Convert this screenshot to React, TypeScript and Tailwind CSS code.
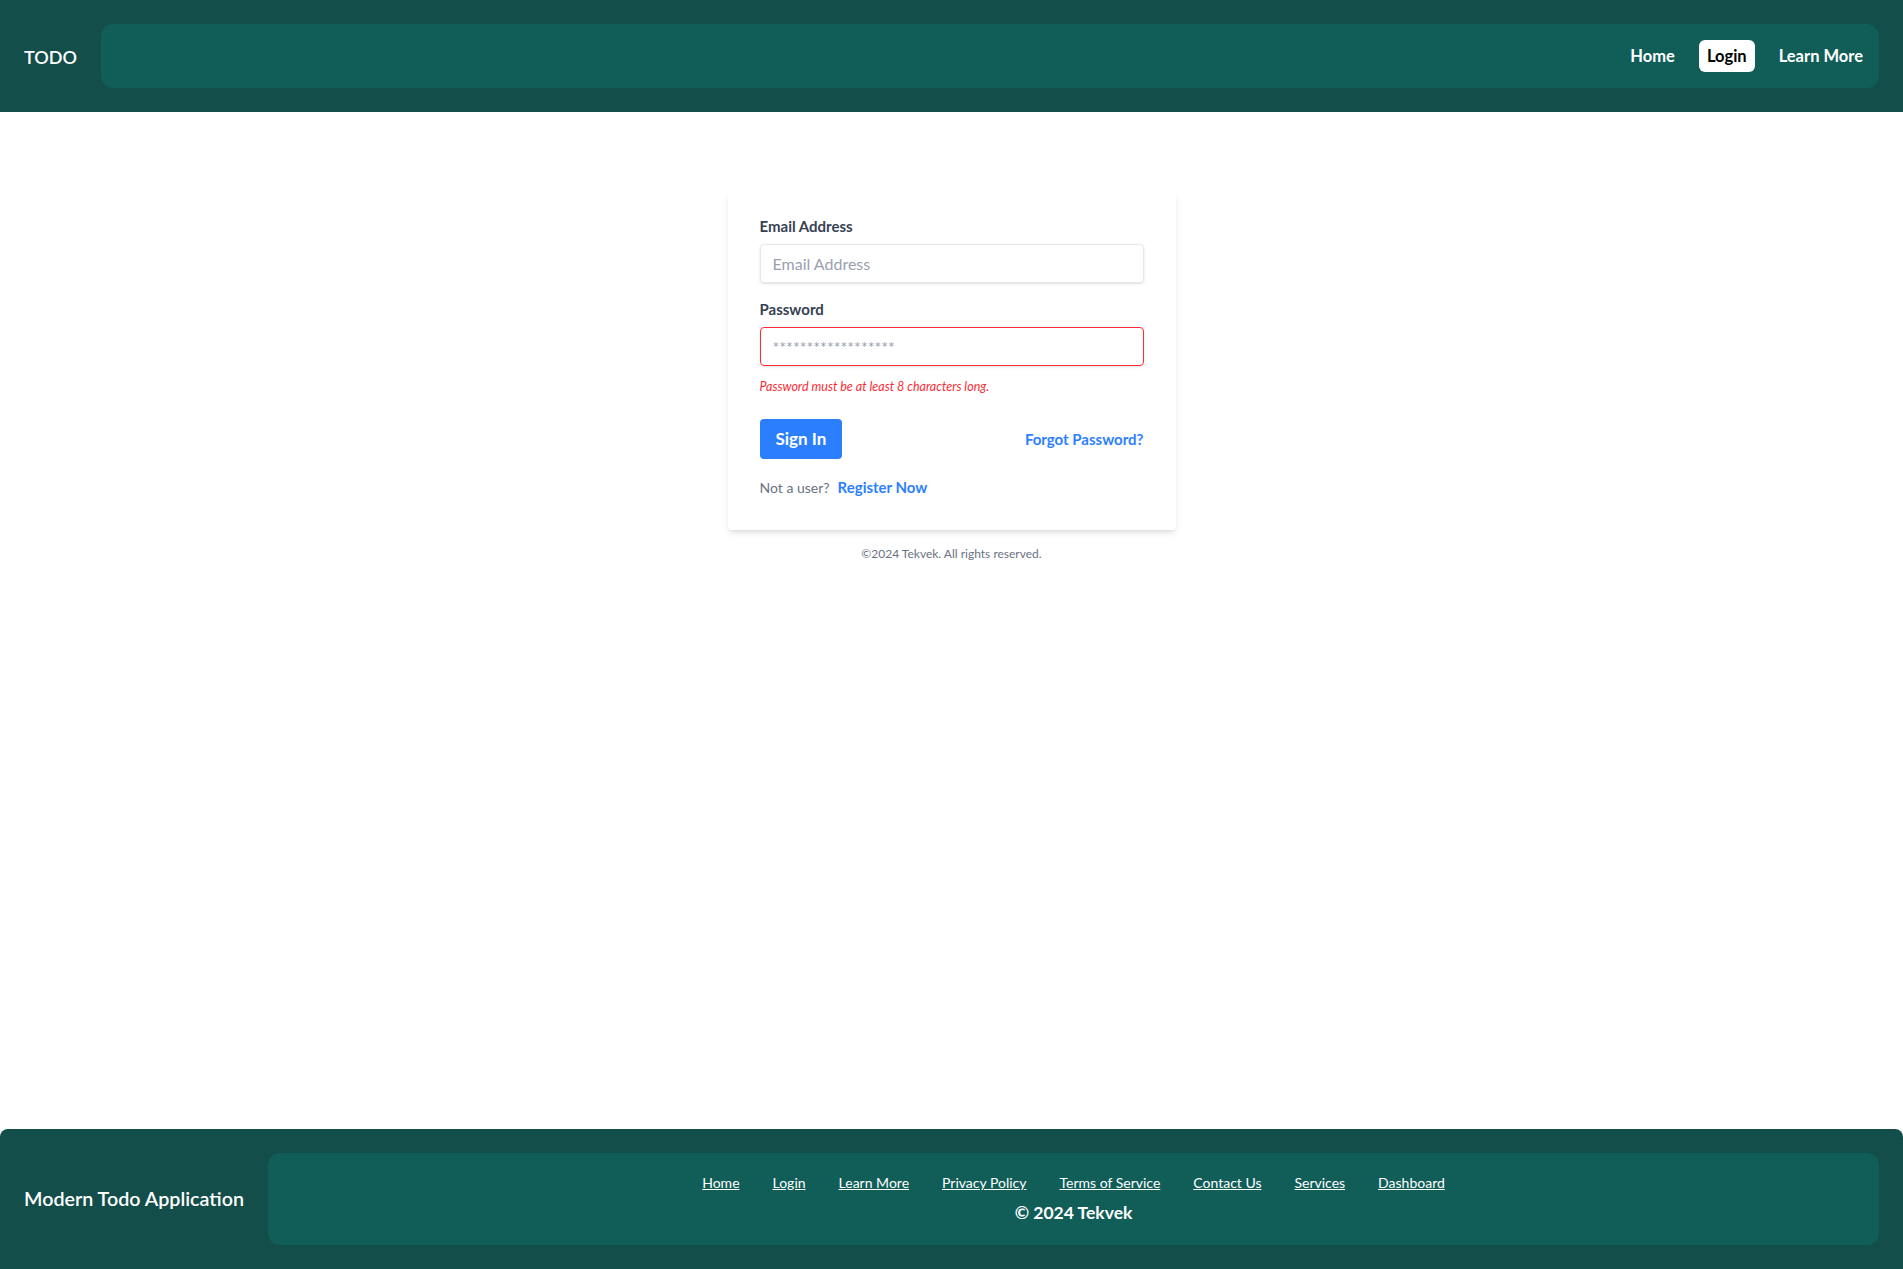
import React from "react";

export default function App() {
  const footerLinks = [
    "Home",
    "Login",
    "Learn More",
    "Privacy Policy",
    "Terms of Service",
    "Contact Us",
    "Services",
    "Dashboard",
  ];
  return (
    <div
      className="min-h-screen flex flex-col bg-white"
      style={{ fontFamily: "Lato, 'Noto Sans', sans-serif" }}
    >
      <header className="bg-[#134e4a] p-6 flex items-center gap-6">
        <div className="text-white text-[18px] leading-7 font-semibold pt-[2px]">TODO</div>
        <nav className="flex-1 bg-[#115e59] rounded-xl h-16 flex items-center justify-end px-2 gap-4">
          <a className="px-2 h-8 flex items-center text-white font-bold text-[16.5px] rounded-md pt-[1px]">Home</a>
          <a className="px-2 h-8 flex items-center bg-white text-black font-bold text-[16.5px] rounded-md pt-[1px]">Login</a>
          <a className="px-2 h-8 flex items-center text-white font-bold text-[16.5px] rounded-md pt-[1px]">Learn More</a>
        </nav>
      </header>

      <main className="flex-1 flex flex-col items-center pt-20">
        <div className="w-[448px]">
          <form className="bg-white shadow-md rounded px-8 pt-6 pb-8 mb-4">
            <div className="mb-4">
              <label className="block text-gray-700 text-[15px] leading-5 font-bold mb-2">Email Address</label>
              <input
                className="shadow appearance-none border border-gray-200 rounded w-full py-2 px-3 h-[39px] text-gray-700 leading-tight text-base placeholder:text-gray-400 outline-none"
                type="email"
                placeholder="Email Address"
              />
            </div>
            <div className="mb-6">
              <label className="block text-gray-700 text-[15px] leading-5 font-bold mb-2">Password</label>
              <input
                className="shadow appearance-none border border-red-500 rounded w-full py-2 px-3 h-[39px] text-gray-700 mb-3 leading-tight text-base placeholder:text-gray-400 outline-none"
                type="password"
                placeholder="******************"
              />
              <p className="text-red-500 text-[12.5px] leading-4 italic pt-[1px]">Password must be at least 8 characters long.</p>
            </div>
            <div className="flex items-center justify-between">
              <button
                className="bg-blue-500 text-white font-bold text-[17px] leading-6 py-2 px-4 rounded"
                type="button"
              >
                Sign In
              </button>
              <a className="inline-block align-baseline font-bold text-[15px] text-blue-500">Forgot Password?</a>
            </div>
            <div className="mt-[18px] leading-5 flex items-baseline">
              <span className="text-gray-500 text-sm">Not a user?</span>
              <a className="ml-2 font-bold text-[15px] text-blue-500">Register Now</a>
            </div>
          </form>
          <p className="text-center text-gray-500 text-xs">©2024 Tekvek. All rights reserved.</p>
        </div>
      </main>

      <footer className="bg-[#134e4a] rounded-t-lg p-6 flex items-center gap-6">
        <div className="text-white text-[19.7px] font-semibold">Modern Todo Application</div>
        <div className="flex-1 bg-[#115e59] rounded-xl py-5 flex flex-col items-center">
          <div className="flex items-center gap-[33px] text-sm leading-5 text-white">
            {footerLinks.map((l) => (
              <a key={l} className="underline">
                {l}
              </a>
            ))}
          </div>
          <div className="mt-2 text-white font-bold text-[17.5px] leading-6">© 2024 Tekvek</div>
        </div>
      </footer>
    </div>
  );
}
